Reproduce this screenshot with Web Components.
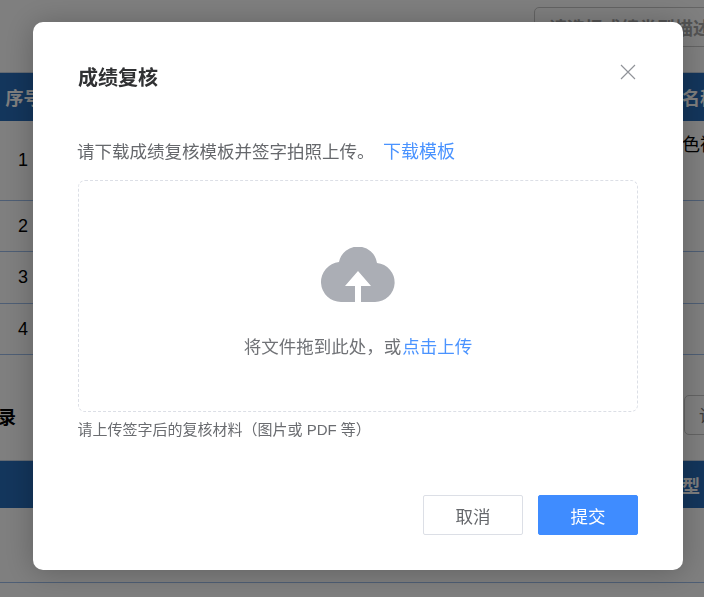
<!DOCTYPE html>
<html lang="zh">
<head>
<meta charset="utf-8">
<title>成绩复核</title>
<style>
  html, body { margin: 0; height: 100%; overflow: hidden; background: #fff; }
  body { font-family: "Liberation Sans", "Noto Sans CJK SC", sans-serif; }
</style>
</head>
<body>

<score-page>
  <score-table slot="first" variant="first">
    <score-row head height="49"><span>序号</span><span>名称</span></score-row>
    <score-row height="80" top><span>1</span><span>色袍</span></score-row>
    <score-row height="51"><span>2</span></score-row>
    <score-row height="52"><span>3</span></score-row>
    <score-row height="51"><span>4</span></score-row>
  </score-table>
  <score-table slot="second" variant="second">
    <score-row head height="48"><span></span><span>型</span></score-row>
    <score-row height="75"></score-row>
  </score-table>
</score-page>

<modal-dialog heading="成绩复核">
  <p-line>请下载成绩复核模板并签字拍照上传。<a-link slot="link">下载模板</a-link></p-line>
  <upload-box>将文件拖到此处，或<a-link>点击上传</a-link></upload-box>
  <hint-text>请上传签字后的复核材料（图片或 PDF 等）</hint-text>
  <flat-button slot="footer">取消</flat-button>
  <flat-button slot="footer" primary>提交</flat-button>
</modal-dialog>

<script>
  const cjk = '"Noto Sans CJK SC", "Liberation Sans", sans-serif';

  class ScorePage extends HTMLElement {
    constructor() {
      super();
      this.attachShadow({mode: 'open'}).innerHTML = `
        <style>
          :host { display: block; width: 704px; height: 597px; overflow: hidden; background: #fff; }
          .tools { height: 72px; box-sizing: border-box; padding: 7px 0 0 534px; }
          .select {
            width: 220px; height: 40px; box-sizing: border-box; border: 1px solid #c8c8c8; border-radius: 5px;
            display: flex; align-items: center; padding-left: 14px; font: bold 18px ${cjk}; color: #a6a6a6;
            white-space: nowrap; overflow: hidden;
          }
          .section { height: 105px; box-sizing: border-box; display: flex; justify-content: space-between; align-items: flex-start; }
          .title { font: bold 18px ${cjk}; color: #000; margin: 48px 0 0 -2px; line-height: 26px; }
          .more {
            width: 60px; height: 40px; margin-top: 40px; margin-right: -40px; box-sizing: border-box;
            border: 1px solid #c8c8c8; border-radius: 5px; padding: 6px 0 0 14px;
            font: 17.5px ${cjk}; color: #777; overflow: hidden; white-space: nowrap;
          }
        </style>
        <div class="tools"><div class="select">请选择成绩类型描述</div></div>
        <slot name="first"></slot>
        <div class="section"><div class="title">录</div><div class="more">详情</div></div>
        <slot name="second"></slot>`;
    }
  }

  class ScoreTable extends HTMLElement {
    constructor() {
      super();
      this.attachShadow({mode: 'open'}).innerHTML = `
        <style>:host { display: block; width: 704px; }</style>
        <slot></slot>`;
    }
  }

  class ScoreRow extends HTMLElement {
    constructor() {
      super();
      this.attachShadow({mode: 'open'}).innerHTML = `
        <style>
          :host {
            display: grid; grid-template-columns: 46px 1fr; box-sizing: border-box; width: 704px;
            border-bottom: 1px solid #9dbdea; font: 18px "Liberation Sans", "Noto Sans CJK SC", sans-serif; color: #000;
            align-items: center;
          }
          :host([head]) { background: #276cb9; color: #fff; font-weight: bold; border-bottom: 0; border-top: 1px solid #c8d4e4; }
          .cells { display: contents; }
          ::slotted(span) { white-space: nowrap; }
          ::slotted(span:first-child) { text-align: center; }
          :host([head]) ::slotted(span:first-child) { padding-left: 1px; }
          ::slotted(span:nth-child(2)) { grid-column: 2; padding-left: 636px; }
          :host([top]) ::slotted(span:nth-child(2)) { align-self: start; padding-top: 9px; }
        </style>
        <div class="cells"><slot></slot></div>`;
      this.style.height = this.getAttribute('height') + 'px';
    }
  }

  class ModalDialog extends HTMLElement {
    constructor() {
      super();
      this.attachShadow({mode: 'open'}).innerHTML = `
        <style>
          :host {
            position: fixed; inset: 0; display: block; background: rgba(0, 0, 0, .5);
          }
          .panel {
            width: 650px; height: 548px; margin: 22px 0 0 33px; box-sizing: border-box; background: #fff;
            border-radius: 10px; box-shadow: 0 2px 30px rgba(0, 0, 0, .25); display: flex; flex-direction: column;
            padding: 0 45px 35px;
          }
          header { height: 110px; flex: none; box-sizing: border-box; padding-top: 40px; display: flex; justify-content: space-between; align-items: flex-start; }
          h2 { margin: 0; font: bold 20px/30px ${cjk}; color: #303133; }
          svg { display: block; margin: 2px 2px 0 0; }
          main { flex: 1; }
          footer { display: flex; justify-content: flex-end; gap: 15px; }
        </style>
        <div class="panel">
          <header>
            <h2>${this.getAttribute('heading')}</h2>
            <svg width="16" height="16" viewBox="0 0 16 16" fill="none" stroke="#909399" stroke-width="1.15">
              <path d="M1 1 15 15M15 1 1 15"/>
            </svg>
          </header>
          <main><slot></slot></main>
          <footer><slot name="footer"></slot></footer>
        </div>`;
    }
  }

  class PLine extends HTMLElement {
    constructor() {
      super();
      this.attachShadow({mode: 'open'}).innerHTML = `
        <style>
          :host { display: block; height: 48px; font: 17.5px/36px ${cjk}; color: #66686c; white-space: nowrap; margin-left: -1px; }
          ::slotted(a-link) { margin-left: 4.5px; font-size: 18px; }
        </style>
        <slot></slot><slot name="link"></slot>`;
    }
  }

  class ALink extends HTMLElement {
    constructor() {
      super();
      this.attachShadow({mode: 'open'}).innerHTML = `
        <style>:host { display: inline; color: #4a93ff; cursor: pointer; }</style>
        <slot></slot>`;
    }
  }

  class UploadBox extends HTMLElement {
    constructor() {
      super();
      this.attachShadow({mode: 'open'}).innerHTML = `
        <style>
          :host {
            display: flex; flex-direction: column; align-items: center; box-sizing: border-box;
            width: 560px; height: 232px; border: 1px dashed #dcdfe6; border-radius: 7px;
            padding-top: 66px; font: 17.5px/26px ${cjk}; color: #707276;
          }
          svg { display: block; margin-bottom: 31px; }
          ::slotted(a-link) { margin-left: -3px; }
        </style>
        <svg width="74" height="55" viewBox="0 0 74 55">
          <path fill="#abaeb5" d="M20 55A20 20 0 0 1 18 15.1A19.3 19.3 0 0 1 56 15.9A19.6 19.6 0 0 1 54 55Z"/>
          <path fill="#fff" d="M37 24 50 39H40V55H34V39H24Z"/>
        </svg>
        <div><slot></slot></div>`;
    }
  }

  class HintText extends HTMLElement {
    constructor() {
      super();
      this.attachShadow({mode: 'open'}).innerHTML = `
        <style>
          :host { display: block; margin-top: 6px; margin-left: -0.5px; font: 15px/24px "Liberation Sans", ${cjk}; color: #6a6c70; white-space: nowrap; }
        </style>
        <slot></slot>`;
    }
  }

  class FlatButton extends HTMLElement {
    constructor() {
      super();
      this.attachShadow({mode: 'open'}).innerHTML = `
        <style>
          :host {
            display: flex; align-items: center; justify-content: center; box-sizing: border-box;
            width: 100px; height: 40px; border: 1px solid #dcdfe6; border-radius: 2px; background: #fff;
            font: 17.5px ${cjk}; color: #66686c; cursor: pointer;
          }
          :host([primary]) { background: #3f8cff; border-color: #3f8cff; color: #fff; }
        </style>
        <slot></slot>`;
    }
  }

  customElements.define('score-page', ScorePage);
  customElements.define('score-table', ScoreTable);
  customElements.define('score-row', ScoreRow);
  customElements.define('modal-dialog', ModalDialog);
  customElements.define('p-line', PLine);
  customElements.define('a-link', ALink);
  customElements.define('upload-box', UploadBox);
  customElements.define('hint-text', HintText);
  customElements.define('flat-button', FlatButton);
</script>
</body>
</html>
